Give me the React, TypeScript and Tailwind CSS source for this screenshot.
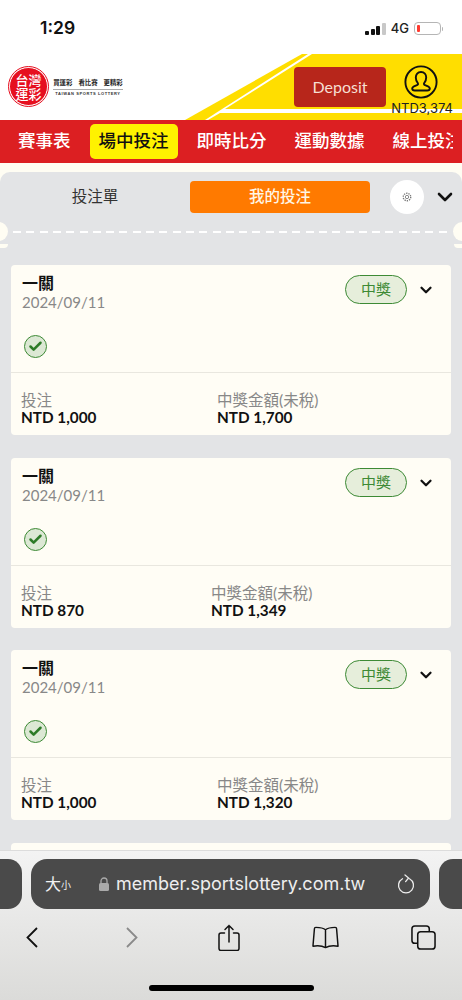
import { ChevronDown, Check } from "lucide-react";

const cjk = "font-['Lato','Noto_Sans_CJK_TC',sans-serif]";

const bets = [
  { stake: "NTD 1,000", win: "NTD 1,700", col: "w-[196px]" },
  { stake: "NTD 870", win: "NTD 1,349", col: "w-[190px]" },
  { stake: "NTD 1,000", win: "NTD 1,320", col: "w-[196px]" },
];

function StatusBar() {
  return (
    <div className="flex h-[54px] items-center justify-between bg-white pl-[40px] pr-[19px] pt-[3px]">
      <span className="font-['Inter',sans-serif] text-[17.5px] font-semibold text-[#111]">1:29</span>
      <div className="flex items-center">
        <div className="flex items-end gap-[1.5px]">
          <span className="h-[4px] w-[4px] rounded-[1px] bg-[#111]" />
          <span className="h-[6px] w-[4px] rounded-[1px] bg-[#111]" />
          <span className="h-[9px] w-[4px] rounded-[1px] bg-[#111]" />
          <span className="h-[12px] w-[4px] rounded-[1px] bg-[#c8c8c8]" />
        </div>
        <span className="ml-[5px] font-['Inter',sans-serif] text-[13px] font-medium text-[#222]">4G</span>
        <div className="ml-[5px] flex h-[13px] w-[27px] items-center rounded-[4px] border border-[#b5b5b5] p-[2px]">
          <span className="h-full w-[3px] rounded-[1px] bg-[#ff3b30]" />
        </div>
        <span className="ml-[1px] h-[4px] w-[1px] rounded-r bg-[#b5b5b5]" />
      </div>
    </div>
  );
}

function Logo() {
  return (
    <div className="flex items-center">
      <div className="flex h-[39px] w-[39px] flex-col items-center justify-center rounded-full border border-white bg-[#e60f1f] text-[13px] font-medium leading-[14px] text-white outline outline-1 outline-[#e60f1f]">
        <span className={cjk}>台灣</span>
        <span className={cjk}>運彩</span>
      </div>
      <div className="ml-[5px] flex w-[70px] flex-col items-center pt-[2px]">
        <div className={`${cjk} flex w-full justify-center gap-[6px] border-b border-[#aaa] pb-[1px] text-[6.4px] font-bold leading-[10px] whitespace-nowrap text-[#222]`}>
          <span>買運彩</span>
          <span>看比賽</span>
          <span>更精彩</span>
        </div>
        <span className="mt-[1px] font-['Liberation_Sans',sans-serif] text-[4px] leading-[6px] font-bold tracking-[0.6px] whitespace-nowrap text-[#333]">
          TAIWAN SPORTS LOTTERY
        </span>
      </div>
    </div>
  );
}

function UserIcon() {
  return (
    <svg viewBox="0 0 34 34" className="-mt-[2px] h-[34px] w-[34px]" fill="none" stroke="#111" strokeWidth="1.9">
      <circle cx="17" cy="17" r="15.6" />
      <path d="M17 7c-3.300 0-5.200 2.500-5.200 5.600 0 2.400.9 4.300 2 5.500.4.600.3 1.400-.3 1.800-1.900 1-5.300 1.500-5.300 3.700 0 1.300 1.100 1.900 2.600 1.900h12.400c1.500 0 2.600-.6 2.600-1.900 0-2.200-3.400-2.700-5.300-3.700-.6-.4-.7-1.200-.3-1.800 1.100-1.200 2-3.100 2-5.500C22.200 9.500 20.300 7 17 7z" />
    </svg>
  );
}

function Header() {
  return (
    <div className="relative flex h-[66px] items-start justify-between bg-white pl-[9px] pr-[24px] pt-[13px]">
      <svg viewBox="0 0 277 66" className="absolute right-0 top-0 h-[66px] w-[277px]">
        <path d="M117 0h6L20 66H0z" fill="#ffde00" />
        <path d="M127 0h150v55H40z" fill="#ffde00" />
        <path d="M35 59h242v7H23z" fill="#ffde00" />
      </svg>
      <Logo />
      <div className="relative flex items-start">
        <button className="mr-[18px] flex h-[40px] w-[92px] items-center justify-center rounded-[4px] bg-[#b7261b] font-['Lato',sans-serif] text-[16px] text-[#f6dfd2]">
          Deposit
        </button>
        <UserIcon />
        <span className="absolute -right-[15px] top-[33px] font-['Inter',sans-serif] text-[13px] leading-[16px] text-[#222]">NTD3,374</span>
      </div>
    </div>
  );
}

function Nav() {
  const items = ["賽事表", "場中投注", "即時比分", "運動數據", "線上投注"];
  return (
    <div className="flex h-[43px] items-start overflow-hidden bg-[#dc1f22] pl-[9px] pr-[9px] pt-[4px]">
      <div className="flex w-full gap-[10px] overflow-hidden">
        {items.map((item, i) => (
          <span
            key={item}
            className={`${cjk} flex h-[35px] shrink-0 items-center rounded-[5px] px-[9px] text-[17.5px] font-medium ${
              i === 1 ? "bg-[#fff200] text-[#111]" : "text-white"
            }`}
          >
            {item}
          </span>
        ))}
      </div>
    </div>
  );
}

function Tabs() {
  return (
    <div className="flex items-center pl-[10px] pt-[8px]">
      <span className={`${cjk} w-[170px] text-center text-[15.5px] text-[#333]`}>投注單</span>
      <span className={`${cjk} ml-[10px] flex h-[32px] w-[180px] items-center justify-center rounded-[4px] bg-[#ff7a00] text-[15.5px] font-medium text-[#fff6e6]`}>
        我的投注
      </span>
      <span className="ml-[20px] flex h-[34px] w-[34px] items-center justify-center rounded-full bg-white">
        <svg viewBox="0 0 12 12" className="h-[10px] w-[10px]" fill="none" stroke="#777" strokeWidth="1">
          <circle cx="6" cy="6" r="2" />
          <circle cx="6" cy="6" r="4.5" strokeDasharray="1.6 1.2" strokeWidth="1.6" />
        </svg>
      </span>
      <ChevronDown className="ml-[9px] h-[24px] w-[24px] text-[#111]" strokeWidth={2.6} />
    </div>
  );
}

function Perforation() {
  return (
    <div className="relative mt-[8px] h-[26px]">
      <span className="absolute -left-[11px] top-0 h-[19px] w-[19px] rounded-full bg-[#fffdf3]" />
      <span className="absolute -right-[11px] top-0 h-[19px] w-[20px] rounded-full bg-[#fffdf3]" />
      <span className="absolute left-0 top-[22px] h-[4px] w-[8px] rounded-br-full bg-[#fffdf3]" />
      <span className="absolute right-0 top-[22px] h-[4px] w-[8px] rounded-bl-full bg-[#fffdf3]" />
      <div className="absolute left-[13px] right-[12px] top-[9px] h-[2px] bg-[repeating-linear-gradient(90deg,#fff_0_8px,transparent_8px_13.3px)]" />
    </div>
  );
}

function WinCheck() {
  return (
    <span className="flex h-[23px] w-[23px] items-center justify-center rounded-full border border-[#3d8a35] bg-[#dce8d4]">
      <Check className="h-[15px] w-[15px] text-[#2c7a26]" strokeWidth={4} />
    </span>
  );
}

function BetCard({ stake, win, col }: { stake: string; win: string; col: string }) {
  return (
    <div className="rounded-[4px] bg-[#fffdf5]">
      <div className="relative h-[107px] px-[11px] pt-[8px]">
        <div className={`${cjk} text-[16px] font-bold leading-[20px] text-[#111]`}>一關</div>
        <div className="font-['Lato',sans-serif] text-[15px] leading-[18px] text-[#888]">2024/09/11</div>
        <span className={`${cjk} absolute left-[334px] top-[10px] flex h-[29px] w-[62px] items-center justify-center rounded-full border border-[#3d8a35] bg-[#e6eedb] text-[15px] text-[#3d8a35]`}>
          中獎
        </span>
        <ChevronDown className="absolute left-[406px] top-[16px] h-[18px] w-[18px] text-[#111]" strokeWidth={3} />
        <div className="mt-[24px] pl-[2px]">
          <WinCheck />
        </div>
      </div>
      <div className="flex h-[63px] border-t border-[#e9e7df] px-[10px] pt-[19px]">
        <div className={col}>
          <div className={`${cjk} text-[15.5px] leading-[17px] text-[#888]`}>投注</div>
          <div className="font-['Lato',sans-serif] text-[15.3px] font-bold leading-[17px] text-[#111]">{stake}</div>
        </div>
        <div>
          <div className={`${cjk} text-[15.5px] leading-[17px] text-[#888]`}>中獎金額(未稅)</div>
          <div className="font-['Lato',sans-serif] text-[15.3px] font-bold leading-[17px] text-[#111]">{win}</div>
        </div>
      </div>
    </div>
  );
}

function SafariBar() {
  return (
    <div className="flex h-[150px] shrink-0 flex-col border-t border-[#dcdcdc] bg-gradient-to-b from-[#f3f3f3] to-[#dbdbd9]">
      <div className="mt-[8px] flex h-[50px] gap-[9px]">
        <span className="-ml-[30px] w-[52px] shrink-0 rounded-[14px] bg-[#4a4a4a]" />
        <div className="flex w-[399px] shrink-0 items-center rounded-[16px] bg-[#4a4a4a] pb-[1px] pl-[14px] pr-[15px]">
          <span className={`${cjk} text-[16px] text-[#f2f2f2]`}>大</span>
          <span className={`${cjk} mt-[3px] text-[10px] text-[#f2f2f2]`}>小</span>
          <svg viewBox="0 0 10 14" className="ml-[28px] h-[14px] w-[10px]" fill="#aaa">
            <path d="M2 6V4a3 3 0 0 1 6 0v2" fill="none" stroke="#aaa" strokeWidth="1.3" />
            <rect y="6" width="10" height="8" rx="1.5" />
          </svg>
          <span className="ml-[7px] font-['Inter',sans-serif] text-[18px] whitespace-nowrap text-[#eeeeee]">member.sportslottery.com.tw</span>
          <svg viewBox="0 0 18 20" className="ml-auto h-[20px] w-[18px] shrink-0" fill="none" stroke="#eee" strokeWidth="1.3" strokeLinecap="round">
            <path d="M12.5 4.800A7.500 7.500 0 1 1 5.500 4.800" />
            <path d="M8 1l3.600 3-3 3.600" />
          </svg>
        </div>
        <span className="w-[60px] shrink-0 rounded-[14px] bg-[#4a4a4a]" />
      </div>
      <div className="mt-[13px] flex h-[30px] items-center pl-[26px]">
        <svg viewBox="0 0 12 21" className="h-[21px] w-[12px]" fill="none" stroke="#111" strokeWidth="1.8">
          <path d="M11 1L1.500 10.500 11 20" />
        </svg>
        <svg viewBox="0 0 12 21" className="ml-[88px] h-[21px] w-[12px]" fill="none" stroke="#8a8a8a" strokeWidth="1.8">
          <path d="M1 1l9.500 9.500L1 20" />
        </svg>
        <svg viewBox="0 0 22 27" className="ml-[80px] h-[27px] w-[22px]" fill="none" stroke="#111" strokeWidth="1.500" strokeLinecap="round">
          <path d="M6.500 9H3A2 2 0 0 0 1 11v13.500a2 2 0 0 0 2 2h16a2 2 0 0 0 2-2V11a2 2 0 0 0-2-2h-3.500" />
          <path d="M11 18V1.500M7 5.500l4-4 4 4" />
        </svg>
        <svg viewBox="0 0 28 23" className="ml-[72px] h-[23px] w-[27px]" fill="none" stroke="#111" strokeWidth="1.500" strokeLinejoin="round">
          <path d="M14 3.500C12 1.800 9 1 4 1c-1 0-1.500.5-1.500 1.500L1 20.500c3-.5 9.500-.5 13 1.500 3.500-2 10-2 13-1.500L25.500 2.500c0-1-.5-1.500-1.500-1.500-5 0-8 .8-10 2.500zV22" />
        </svg>
        <svg viewBox="0 0 26 26" className="ml-[72px] h-[25px] w-[25px]" fill="none" stroke="#111" strokeWidth="1.600">
          <rect x="7" y="7" width="18" height="18" rx="3" />
          <path d="M7 19H4a3 3 0 0 1-3-3V4a3 3 0 0 1 3-3h12a3 3 0 0 1 3 3v3" />
        </svg>
      </div>
      <div className="mt-auto mb-[9px] flex justify-center">
        <span className="h-[6px] w-[165px] rounded-full bg-black" />
      </div>
    </div>
  );
}

export default function App() {
  return (
    <div className="flex h-[1000px] w-[462px] flex-col overflow-hidden bg-white">
      <StatusBar />
      <Header />
      <Nav />
      <div className="flex min-h-0 flex-1 flex-col bg-[#fffdf3] pt-[9px]">
        <div className="min-h-0 flex-1 overflow-hidden rounded-t-[10px] bg-[#e3e4e6]">
          <Tabs />
          <Perforation />
          <div className="flex flex-col gap-[22.5px] px-[11px] pt-[17px]">
            {bets.map((b, i) => (
              <BetCard key={i} {...b} />
            ))}
            <div className="h-[20px] rounded-[4px] bg-[#fffdf5]" />
          </div>
        </div>
      </div>
      <SafariBar />
    </div>
  );
}
